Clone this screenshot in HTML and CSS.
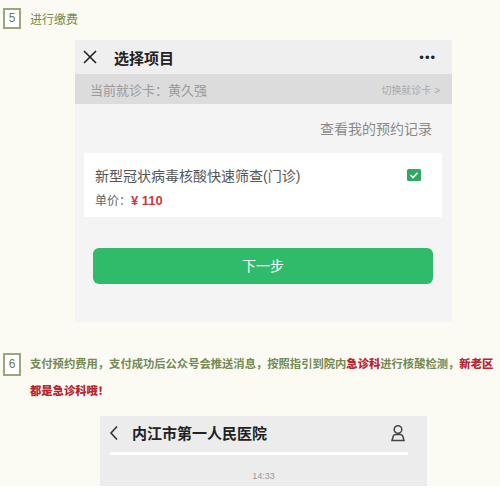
FILE: index.html
```html
<!DOCTYPE html>
<html lang="zh-CN">
<head>
  <meta charset="UTF-8">
  <meta name="viewport" content="width=device-width, initial-scale=1.0">
  <title>核酸检测预约流程</title>
  <link rel="stylesheet" href="styles.css">
</head>
<body>
  <div class="step step-5">
    <span class="num">5</span>
    <span class="step-text">进行缴费</span>
  </div>

  <div class="phone phone-1">
    <div class="topbar">
      <svg class="icon-close" width="14" height="14" viewBox="0 0 14 14">
        <path d="M1 1 L13 13 M13 1 L1 13" stroke="#222" stroke-width="1.6" fill="none"/>
      </svg>
      <span class="title">选择项目</span>
      <span class="dots">&bull;&bull;&bull;</span>
    </div>
    <div class="cardbar">
      <span>当前就诊卡：黄久强</span>
      <span class="switch">切换就诊卡 &gt;</span>
    </div>
    <div class="records">查看我的预约记录</div>
    <div class="item">
      <div class="item-row">
        <span class="item-name">新型冠状病毒核酸快速筛查(门诊)</span>
        <svg class="check" width="14" height="12" viewBox="0 0 14 12">
          <rect x="0" y="0" width="14" height="12" rx="1.5" fill="#2fa860"/>
          <path d="M3.5 6 L6 8.5 L10.5 3.8" stroke="#fff" stroke-width="1.6" fill="none"/>
        </svg>
      </div>
      <div class="price">单价：<b>¥ 110</b></div>
    </div>
    <div class="btn">下一步</div>
  </div>

  <div class="step step-6">
    <span class="num">6</span>
    <div class="step-text">
      <div class="line-1">支付预约费用，支付成功后公众号会推送消息，按照指引到院内<b class="red">急诊科</b>进行核酸检测，<b class="red">新老区</b></div>
      <div class="line-2"><b class="red">都是急诊科哦！</b></div>
    </div>
  </div>

  <div class="phone phone-2">
    <div class="topbar">
      <svg class="icon-back" width="10" height="16" viewBox="0 0 10 16">
        <path d="M8 1.5 L2 8 L8 14.5" stroke="#333" stroke-width="1.6" fill="none"/>
      </svg>
      <span class="title">内江市第一人民医院</span>
      <svg class="icon-user" width="18" height="18" viewBox="0 0 18 18">
        <circle cx="9" cy="5.5" r="3.8" stroke="#444" stroke-width="1.5" fill="none"/>
        <path d="M3 16.5 L4.2 12.2 Q5 10.6 7 10.6 L11 10.6 Q13 10.6 13.8 12.2 L15 16.5 Z" stroke="#444" stroke-width="1.5" fill="none"/>
      </svg>
    </div>
    <div class="line"></div>
    <div class="time">14:33</div>
  </div>
  <div class="bottom"></div>
</body>
</html>
```

FILE: styles.css
```css
body {
  margin: 0;
  padding: 0;
  background-color: #fbfbf4;
  font-family: "Liberation Sans", "Noto Sans CJK SC", sans-serif;
  overflow: hidden;
}
.step {
  display: flex;
  align-items: flex-start;
  padding-left: 3px;
}
.step-5 {
  padding-top: 8px;
  height: 21px;
  align-items: center;
}
.num {
  box-sizing: border-box;
  width: 18px;
  height: 21px;
  border: 2px solid #9ba67c;
  background: #fff;
  color: #6f7d52;
  font-size: 12px;
  line-height: 17px;
  text-align: center;
  flex-shrink: 0;
}
.step-text {
  margin: 0 0 0 9px;
  color: #738a52;
  font-size: 12px;
}
.step-6 {
  margin-top: 31px;
}
.step-6 .num {
  height: 23px;
  line-height: 19px;
}
.step-6 .step-text {
  font-size: 11.3px;
  font-weight: bold;
  line-height: 27px;
  margin-top: -2px;
  white-space: nowrap;
}
.red {
  color: #b8242f;
}

.phone {
  background-color: #f4f4f4;
}
.phone-1 {
  margin: 11px 0 0 75px;
  width: 377px;
  height: 282px;
}
.topbar {
  display: flex;
  align-items: center;
  height: 34px;
  padding: 0 16px 0 8px;
  background-color: #efefef;
}
.icon-close {
  margin-right: 17px;
}
.title {
  flex: 1;
  font-size: 15px;
  font-weight: bold;
  color: #222;
}
.dots {
  font-size: 13px;
  letter-spacing: 1px;
  color: #222;
}
.cardbar {
  display: flex;
  justify-content: space-between;
  align-items: center;
  height: 30px;
  padding: 0 12px 0 15px;
  background-color: #dcdcdc;
  color: #9a9a9a;
  font-size: 13px;
}
.cardbar .switch {
  font-size: 10px;
  color: #a8a8a8;
}
.records {
  height: 49px;
  line-height: 50px;
  text-align: right;
  padding-right: 20px;
  font-size: 14px;
  color: #8a8a8a;
}
.item {
  margin: 0 10px 0 9px;
  height: 64px;
  background-color: #fff;
  padding: 12px 0 0 11px;
  box-sizing: border-box;
}
.item-row {
  display: flex;
  align-items: center;
  justify-content: space-between;
  padding-right: 21px;
}
.item-name {
  font-size: 14px;
  color: #555;
}
.price {
  margin-top: 6px;
  font-size: 12px;
  color: #666;
}
.price b {
  color: #d2363b;
  font-size: 13px;
}
.btn {
  margin: 31px 19px 0 18px;
  height: 36px;
  line-height: 36px;
  border-radius: 6px;
  background-color: #2fbb6a;
  color: #fff;
  font-size: 14px;
  text-align: center;
}

.phone-2 {
  margin: 11px 0 0 100px;
  width: 327px;
  height: 70px;
  background-color: #ececec;
}
.phone-2 .topbar {
  height: 33px;
  padding: 0 20px 0 9px;
  background-color: #ececec;
}
.icon-back {
  margin-right: 13px;
}
.line {
  margin: 3px 19px 0 10px;
  height: 3px;
  background: #fff;
}
.time {
  margin-top: 16px;
  text-align: center;
  font-size: 9px;
  color: #999;
}
.bottom {
  height: 20px;
  background: #fff;
}
```
